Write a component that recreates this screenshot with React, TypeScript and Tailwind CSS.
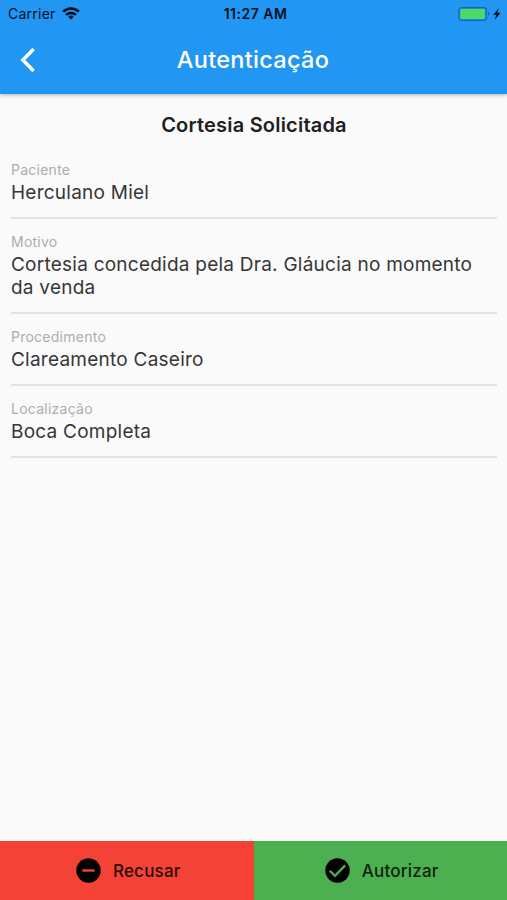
import React from "react"

const fields = [
  { label: "Paciente", value: "Herculano Miel" },
  { label: "Motivo", value: "Cortesia concedida pela Dra. Gláucia no momento da venda" },
  { label: "Procedimento", value: "Clareamento Caseiro" },
  { label: "Localização", value: "Boca Completa" },
]

function WifiIcon() {
  return (
    <svg width="18" height="13" viewBox="0 0 18 13" fill="none" stroke="#03101c" strokeWidth="2.5">
      <path d="M1.2 4.7a11 11 0 0 1 15.6 0" />
      <path d="M4.1 7.9a7 7 0 0 1 9.8 0" />
      <path d="M9 12.6 6.3 9.9a3.9 3.9 0 0 1 5.4 0z" fill="#03101c" stroke="none" />
    </svg>
  )
}

function BatteryIcon() {
  return (
    <svg width="44" height="14" viewBox="0 0 44 14">
      <rect x="0.9" y="0.7" width="27.4" height="12.6" rx="2.6" fill="none" stroke="#1569ab" strokeWidth="1.3" />
      <rect x="2.3" y="2.1" width="24.6" height="9.8" rx="1.2" fill="#4cd964" />
      <path d="M30 4.8c1.8.6 1.8 3.8 0 4.4z" fill="#1569ab" />
      <path d="M40.8 1 35.2 7.9h3.1l-1.7 5 6-7.2h-3.4z" fill="#03101c" />
    </svg>
  )
}

// ----- Status bar + app bar -----
function Header() {
  return (
    <header className="relative z-10 h-[94px] shrink-0 bg-[#2196f3] shadow-[0_1px_4px_rgba(0,0,0,0.3)]">
      <div className="grid h-[27px] grid-cols-3 items-center pr-[5px] pl-[8px] text-[#03101c]">
        <div className="flex items-center gap-[6px]">
          <span className="text-[14px] tracking-[0.25px]">Carrier</span>
          <WifiIcon />
        </div>
        <span className="pl-[1px] text-center text-[14px] font-semibold tracking-[0.5px] whitespace-nowrap">11:27 AM</span>
        <div className="flex justify-end">
          <BatteryIcon />
        </div>
      </div>
      <div className="grid h-[65px] grid-cols-[54px_1fr_54px] items-center">
        <button type="button" aria-label="Voltar" className="flex pl-[20px]">
          <svg width="16" height="26" viewBox="0 0 16 26" fill="none" stroke="#fff" strokeWidth="3.5">
            <path d="M13.6 2 2.9 13l10.7 11" />
          </svg>
        </button>
        <h1 className="pr-[1px] text-center text-[23.5px] font-medium tracking-[0.3px] text-white">Autenticação</h1>
      </div>
    </header>
  )
}

export default function App() {
  return (
    <div className="flex h-screen w-full flex-col overflow-hidden bg-[#fafafa] font-['Inter',sans-serif]">
      <Header />

      <main className="flex-1 pt-[19px] pr-[10px] pl-[11px]">
        <h2 className="text-center text-[20px] leading-[24px] font-semibold tracking-[0.2px] text-[#202020]">
          Cortesia Solicitada
        </h2>
        <dl className="pt-[23px]">
          {fields.map((field) => (
            <div key={field.label} className="mb-[13px] border-b-2 border-[#e2e2e2] pb-[13px]">
              <dt className="text-[14px] leading-[19px] tracking-[0.25px] text-[#adadad]">{field.label}</dt>
              <dd className="pt-[2px] text-[19px] leading-[23px] tracking-[0.24px] text-[#363636]">{field.value}</dd>
            </div>
          ))}
        </dl>
      </main>

      {/* ----- Actions ----- */}
      <footer className="grid h-[59px] shrink-0 grid-cols-2 text-[17px] font-medium tracking-[0.2px]">
        <button type="button" className="flex items-center justify-center gap-[12px] bg-[#f44336] pl-[3px] text-[#2a0b09]">
          <svg width="25" height="25" viewBox="0 0 25 25">
            <circle cx="12.5" cy="12.5" r="12.2" fill="#000" />
            <path d="M6.3 12.5h12.4" stroke="#f44336" strokeWidth="2.4" />
          </svg>
          <span className="pt-[2px]">Recusar</span>
        </button>
        <button type="button" className="flex items-center justify-center gap-[12px] bg-[#4caf50] pl-[3px] text-[#0d1f0e]">
          <svg width="25" height="25" viewBox="0 0 25 25">
            <circle cx="12.5" cy="12.5" r="12.2" fill="#000" />
            <path d="m4.8 12.8 5.2 5.1L20.2 7.4" fill="none" stroke="#4caf50" strokeWidth="2.3" />
          </svg>
          <span className="pt-[2px]">Autorizar</span>
        </button>
      </footer>
    </div>
  )
}
